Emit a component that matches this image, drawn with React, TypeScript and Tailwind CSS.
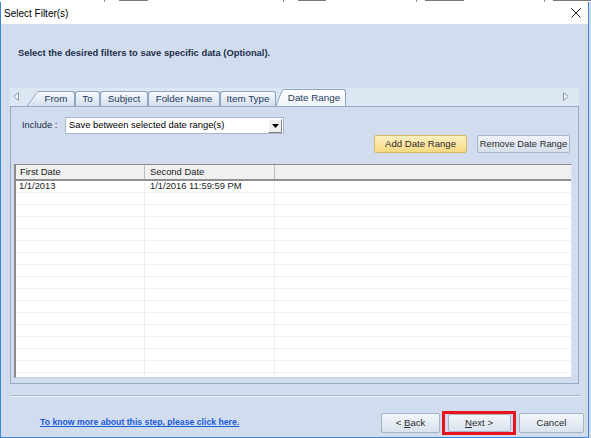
import React from 'react';

const rows = Array.from({ length: 17 }, (_, i) => i);

function ScrollArrow({ dir }: { dir: 'left' | 'right' }) {
  return (
    <svg width="6" height="9" viewBox="0 0 6 9" className="shrink-0">
      {dir === 'left' ? (
        <path d="M5.5 0.5 L0.8 4.5 L5.5 8.5 Z" fill="#f3f6fa" stroke="#8a97a8" strokeWidth="1" />
      ) : (
        <path d="M0.5 0.5 L5.2 4.5 L0.5 8.5 Z" fill="#f3f6fa" stroke="#8a97a8" strokeWidth="1" />
      )}
    </svg>
  );
}

function Slant({ w, h, active }: { w: number; h: number; active?: boolean }) {
  return (
    <svg width={w} height={h} viewBox={`0 0 ${w} ${h}`} className="shrink-0 -mr-px">
      <defs>
        <linearGradient id={active ? 'ga' : 'gi'} x1="0" y1="0" x2="0" y2="1">
          <stop offset="0" stopColor={active ? '#ffffff' : '#f7f9fc'} />
          <stop offset="1" stopColor={active ? '#eef3fa' : '#d3dfee'} />
        </linearGradient>
      </defs>
      <path d={`M0 ${h} L${w - 2} 1.5 Q${w - 1} 0.5 ${w} 0.5 L${w} ${h} Z`} fill={`url(#${active ? 'ga' : 'gi'})`} />
      <path d={`M0 ${h} L${w - 2} 1.5 Q${w - 1} 0.5 ${w} 0.5`} fill="none" stroke="#8fa4bf" strokeWidth="1" />
    </svg>
  );
}

function Tab({ label, w, hook = true }: { label: string; w: number; hook?: boolean }) {
  return (
    <div
      className={`h-[15px] flex items-center justify-center border-t border-r border-[#8fa4bf] rounded-tr-[3px] bg-gradient-to-b from-[#f7f9fc] to-[#d3dfee] text-[9.8px] text-[#1f3a5c] ${
        hook ? 'border-l rounded-tl-[3px]' : ''
      }`}
      style={{ width: w }}
    >
      {label}
    </div>
  );
}

function Btn({ children, w, h = 20 }: { children: React.ReactNode; w: number; h?: number }) {
  return (
    <div
      className="flex items-center justify-center border border-[#a5b4c7] rounded-[2px] bg-gradient-to-b from-[#f3f6fa] to-[#d9e2ee] text-[9.6px] text-[#2b2b2b]"
      style={{ width: w, height: h }}
    >
      {children}
    </div>
  );
}

export default function App() {
  return (
    <div className="relative w-[591px] h-[438px] overflow-hidden bg-[#d7d7d7] font-['Liberation_Sans',Arial,sans-serif] text-[9.4px] text-[#1a1a1a]">
      {/* window behind */}
      <div className="h-[2px] bg-white flex items-start">
        <div className="ml-[104px] w-px h-[2px] bg-[#8a8a8a]" />
        <div className="ml-[14px] w-[30px] h-px bg-[#7a7a7a]" />
        <div className="ml-[135px] w-px h-[2px] bg-[#8a8a8a]" />
        <div className="ml-[14px] w-[30px] h-px bg-[#7a7a7a]" />
        <div className="ml-[90px] w-px h-[2px] bg-[#8a8a8a]" />
        <div className="ml-[8px] w-[40px] h-px bg-[#7a7a7a]" />
        <div className="ml-[80px] w-px h-[2px] bg-[#8a8a8a]" />
        <div className="ml-[8px] w-[40px] h-px bg-[#7a7a7a]" />
      </div>

      <div className="flex flex-col w-[589px] h-[436px] border-x border-b border-[#3a87da] bg-[#d1ddee]">
        {/* title bar */}
        <div className="h-[22px] bg-white flex items-center justify-between pl-[3px] pr-[7px]">
          <span className="text-[10px] text-black">Select Filter(s)</span>
          <svg width="10" height="10" viewBox="0 0 10 10">
            <path d="M0.5 0.5 L9.5 9.5 M9.5 0.5 L0.5 9.5" stroke="#1a1a1a" strokeWidth="1" />
          </svg>
        </div>

        {/* heading */}
        <div className="mt-[23px] ml-[17px] h-[12px] leading-[12px] font-bold text-[9.4px] text-[#1d2f4b]">
          Select the desired filters to save specific data (Optional).
        </div>

        {/* tab strip */}
        <div className="mt-[29px] mx-[9px] h-[18px] bg-[#dde7f4] flex items-end pl-[3px] pr-[10px]">
          <div className="self-center mb-[2px]">
            <ScrollArrow dir="left" />
          </div>
          <div className="ml-[8px] flex items-end">
            <Slant w={12} h={15} />
            <Tab label="From" w={37} hook={false} />
            <Tab label="To" w={25} />
            <Tab label="Subject" w={48} />
            <Tab label="Folder Name" w={72} />
            <Tab label="Item Type" w={56} />
            <Slant w={8} h={17} active />
            <div className="h-[17px] w-[63px] flex items-center justify-center border-t border-r border-[#8fa4bf] rounded-tr-[3px] bg-gradient-to-b from-white to-[#eef3fa] text-[9.8px] text-[#1f3a5c]">
              Date Range
            </div>
          </div>
          <div className="ml-auto self-center mb-[2px]">
            <ScrollArrow dir="right" />
          </div>
        </div>

        {/* tab panel */}
        <div className="mx-[9px] h-[278px] border border-[#97abc5] flex flex-col">
          <div className="mt-[10px] ml-[11px] h-[17px] flex items-center">
            <span className="w-[43px] text-[#1d2f4b]">Include :</span>
            <div className="w-[219px] h-[17px] bg-white border border-[#a9b8ca] flex items-center justify-between pl-[3px] pr-px">
              <span className="text-black">Save between selected date range(s)</span>
              <div className="w-[14px] h-[14px] bg-[#f0f0f0] border-t border-l border-white border-r border-b border-r-[#808080] border-b-[#808080] flex items-center justify-center">
                <svg width="7" height="4" viewBox="0 0 7 4">
                  <path d="M0 0 L7 0 L3.5 4 Z" fill="#000" />
                </svg>
              </div>
            </div>
          </div>

          <div className="mt-px mr-[8px] flex justify-end gap-[10px]">
            <div className="w-[93px] h-[18px] flex items-center justify-center border border-[#d4b865] rounded-[2px] bg-gradient-to-b from-[#fdf0c2] to-[#f6d980] text-[9.6px] text-[#2b2b2b]">
              Add Date Range
            </div>
            <div className="w-[93px] h-[18px] flex items-center justify-center border border-[#a5b4c7] rounded-[2px] bg-gradient-to-b from-[#eef2f8] to-[#d6dfeb] text-[9.4px] text-[#2b2b2b]">
              Remove Date Range
            </div>
          </div>

          {/* list */}
          <div className="mt-[11px] ml-[3px] mr-[6px] h-[214px] overflow-hidden bg-white border-l-2 border-t border-[#8c8c8c] border-r border-b border-r-[#dfe4ea] border-b-[#c5ccd6] flex flex-col">
            <div className="h-[16px] shrink-0 flex bg-[#f0f0f0] border-b-2 border-[#8f8f8f]">
              <div className="w-[129px] pl-[4px] flex items-center border-r border-[#bcbcbc]">First Date</div>
              <div className="w-[130px] pl-[5px] flex items-center border-r border-[#bcbcbc]">Second Date</div>
              <div className="flex-1" />
            </div>
            {rows.map((i) => (
              <div key={i} className="h-[12px] shrink-0 flex border-b border-[#efefef]">
                <div className="w-[129px] pl-[3px] flex items-center border-r border-[#efefef]">
                  {i === 0 ? '1/1/2013' : ''}
                </div>
                <div className="w-[130px] pl-[5px] flex items-center border-r border-[#efefef]">
                  {i === 0 ? '1/1/2016 11:59:59 PM' : ''}
                </div>
                <div className="flex-1" />
              </div>
            ))}
          </div>
        </div>

        {/* separator */}
        <div className="mt-[11px] ml-[9px] mr-[8px] h-[2px] border-t border-[#a6b4c6] border-b border-b-[#eef3f9]" />

        {/* footer */}
        <div className="mt-[14px] h-[24px] flex items-center pl-[39px] pr-[4px]">
          <span className="font-bold underline text-[#1a5bd8] text-[8.7px]">
            To know more about this step, please click here.
          </span>
          <div className="ml-auto flex items-center">
            <Btn w={59}>
              &lt;&nbsp;<u>B</u>ack
            </Btn>
            <div className="ml-[2px] w-[74px] h-[24px] border-[3px] border-[#e5141d] flex items-center justify-center">
              <Btn w={63} h={18}>
                <u>N</u>ext&nbsp;&gt;
              </Btn>
            </div>
            <div className="ml-[3px]">
              <Btn w={65}>Cancel</Btn>
            </div>
          </div>
        </div>
      </div>
    </div>
  );
}
